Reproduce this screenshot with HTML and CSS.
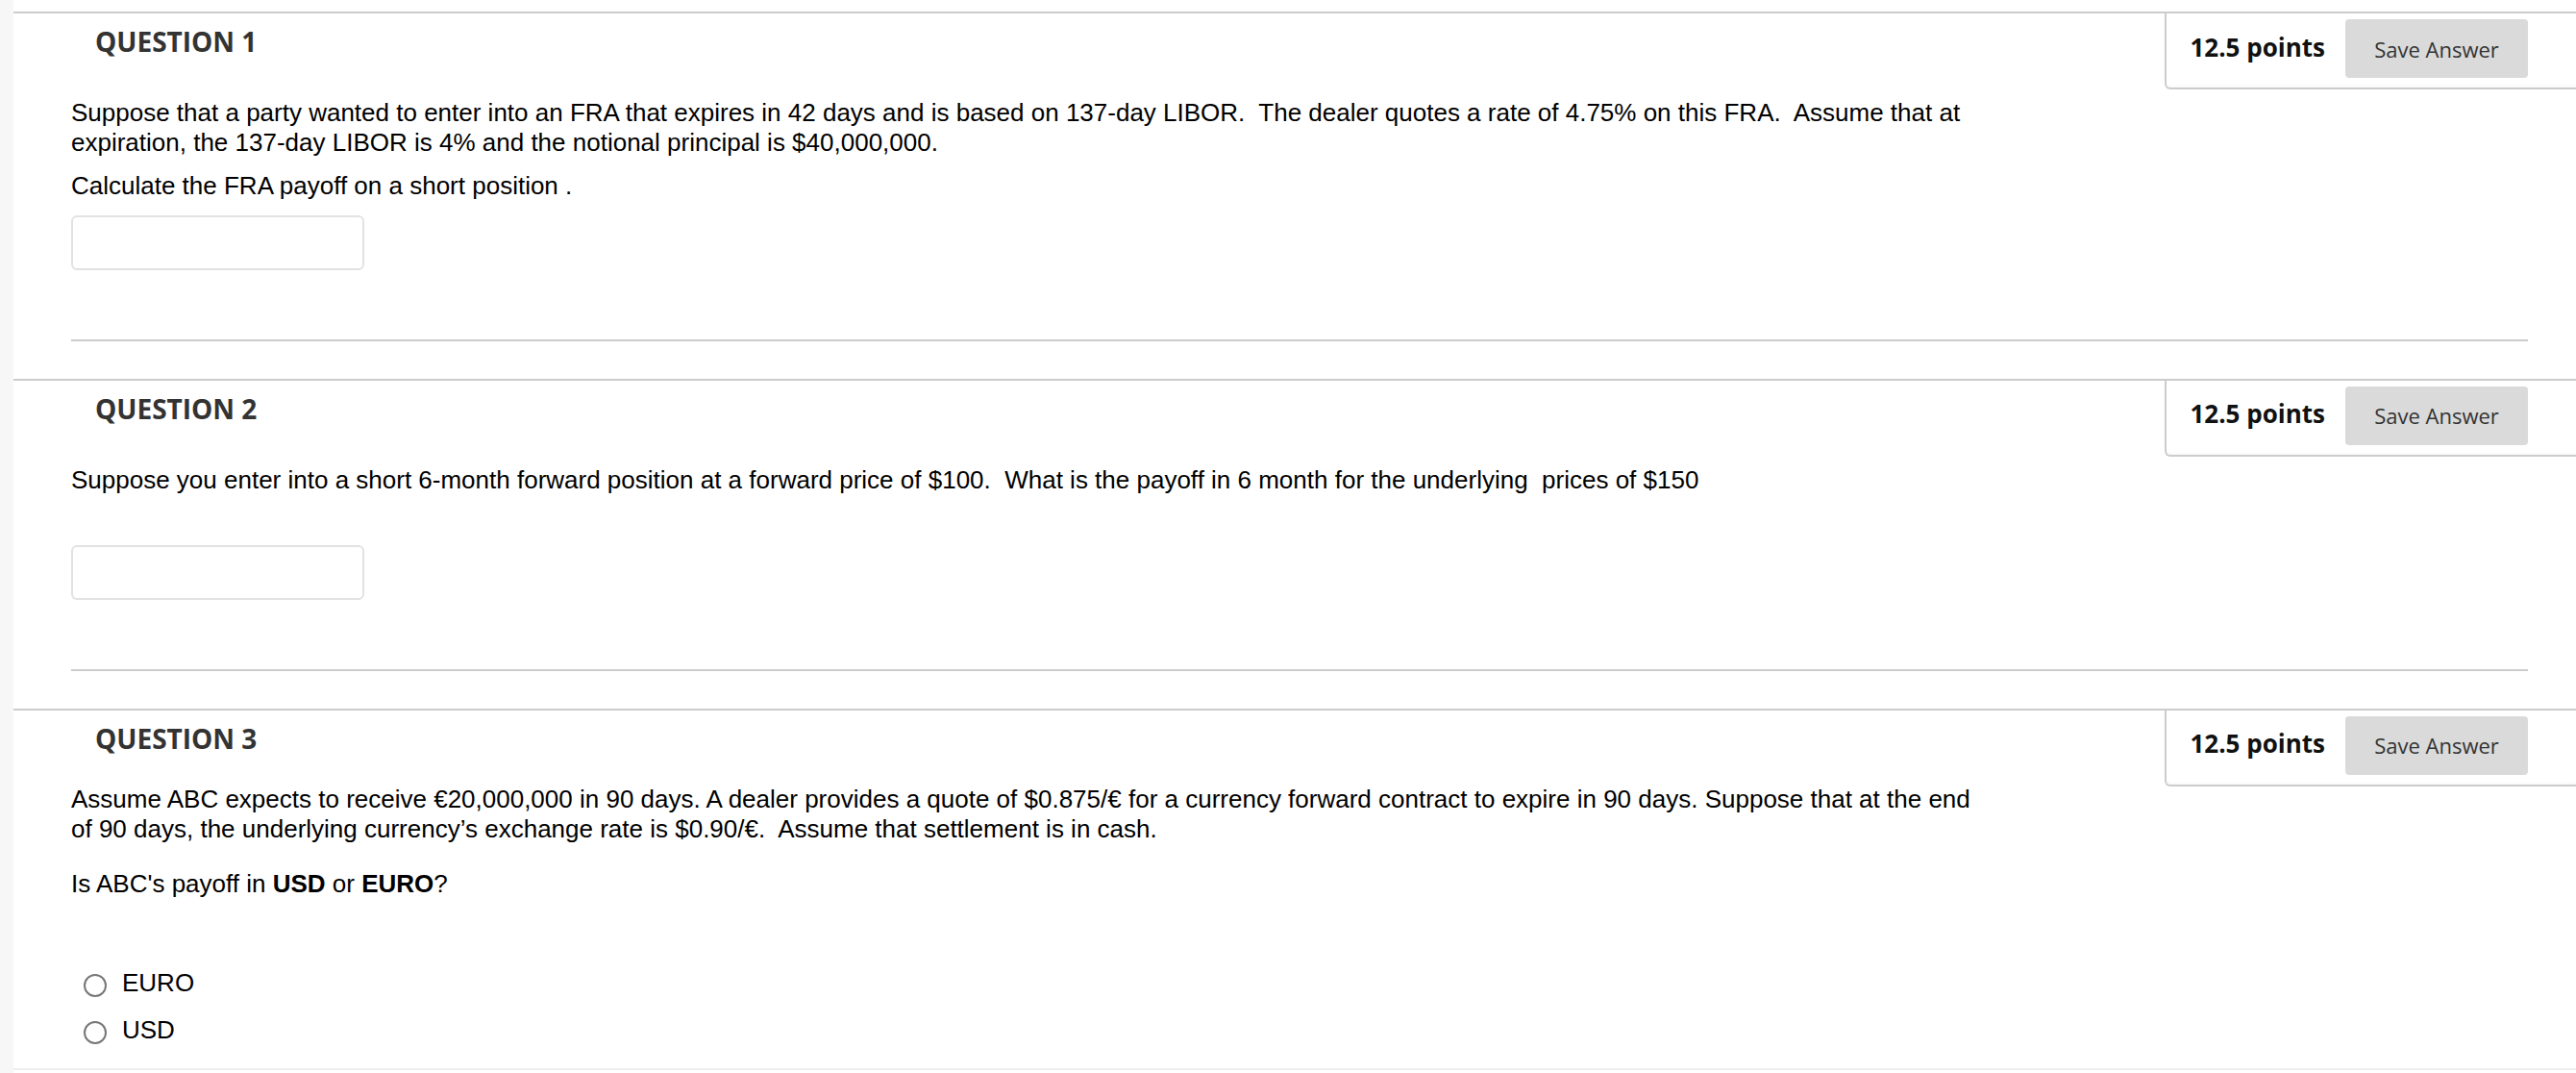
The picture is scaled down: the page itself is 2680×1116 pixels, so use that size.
FILE: index.html
```html
<!DOCTYPE html>
<html lang="en">
<head>
<meta charset="utf-8">
<title>Test</title>
<link rel="stylesheet" href="styles.css">
</head>
<body>
<main class="page">
  <section class="question">
    <div class="points-box">
      <span class="points">12.5 points</span>
      <button class="save-btn" type="button">Save Answer</button>
    </div>
    <h3 class="q-title">QUESTION 1</h3>
    <div class="q-body">
      <p>Suppose that a party wanted to enter into an FRA that expires in 42 days and is based on 137-day LIBOR.&nbsp; The dealer quotes a rate of 4.75% on this FRA.&nbsp; Assume that at expiration, the 137-day LIBOR is 4% and the notional principal is $40,000,000.</p>
      <p>Calculate the FRA payoff on a short position .</p>
      <div class="answer"><input class="answer-input" type="text"></div>
    </div>
    <hr class="q-sep">
  </section>

  <section class="question">
    <div class="points-box">
      <span class="points">12.5 points</span>
      <button class="save-btn" type="button">Save Answer</button>
    </div>
    <h3 class="q-title">QUESTION 2</h3>
    <div class="q-body">
      <p>Suppose you enter into a short 6-month forward position at a forward price of $100.&nbsp; What is the payoff in 6 month for the underlying&nbsp; prices of $150</p>
      <div class="answer answer-spaced"><input class="answer-input" type="text"></div>
    </div>
    <hr class="q-sep">
  </section>

  <section class="question">
    <div class="points-box">
      <span class="points">12.5 points</span>
      <button class="save-btn" type="button">Save Answer</button>
    </div>
    <h3 class="q-title">QUESTION 3</h3>
    <div class="q-body q-body-tight">
      <p class="p-wide">Assume ABC expects to receive €20,000,000 in 90 days. A dealer provides a quote of $0.875/€ for a currency forward contract to expire in 90 days. Suppose that at the end of 90 days, the underlying currency’s exchange rate is $0.90/€.&nbsp; Assume that settlement is in cash.</p>
      <p>Is ABC's payoff in <b>USD</b> or <b>EURO</b>?</p>
      <ul class="choices">
        <li class="choice"><span class="radio"></span><span>EURO</span></li>
        <li class="choice"><span class="radio"></span><span>USD</span></li>
      </ul>
    </div>
  </section>
  <div class="next-question"></div>
</main>
</body>
</html>
```
FILE: styles.css
```css
* { box-sizing: border-box; }
html, body { margin: 0; padding: 0; }
body {
  background: #f7f7f7;
  font-family: "Liberation Sans", Arial, sans-serif;
  color: #000;
  height: 1116px;
  overflow: hidden;
}
.page {
  margin-left: 14px;
  background: #fff;
  padding-top: 12px;
  min-height: 1116px;
}
.question {
  position: relative;
  border-top: 2px solid #cccccc;
  padding: 10px 50px 0 60px;
}
.points-box {
  position: absolute;
  top: 0;
  right: 0;
  display: flex;
  align-items: center;
  gap: 21px;
  padding: 6px 50px 10px 24px;
  border-left: 2px solid #cccccc;
  border-bottom: 2px solid #cccccc;
  border-bottom-left-radius: 6px;
  background: #fff;
  box-shadow: inset 0 -4px 4px -3px rgba(0,0,0,0.04);
}
.points {
  font-family: "Open Sans", sans-serif;
  font-weight: 700;
  font-size: 26px;
  color: #111;
  margin-top: -4px;
}
.save-btn {
  width: 190px;
  height: 61px;
  border: none;
  border-radius: 4px;
  background: #dadada;
  font-family: "Open Sans", sans-serif;
  font-size: 22px;
  color: #333;
  padding: 0;
}
.q-title {
  margin: 0 0 0 25px;
  font-family: "Open Sans", sans-serif;
  font-weight: 700;
  font-size: 28px;
  line-height: 38px;
  color: #333;
}
.q-body {
  margin-top: 40px;
  max-width: 2000px;
  font-size: 26px;
  line-height: 31.2px;
}
.q-body-tight { margin-top: 29px; }
.q-body p { margin: 0 0 14px; }
.q-body .p-wide { margin-bottom: 26px; }
.answer { margin: 0; }
.answer-spaced { margin-top: 52px; }
.answer-input {
  display: block;
  width: 305px;
  height: 57px;
  border: 2px solid #e2e2e2;
  border-radius: 6px;
  background: #fff;
  margin: 0;
}
.q-sep {
  margin: 72px 0 39px;
  border: none;
  border-top: 2px solid #cccccc;
  height: 0;
}
.choices {
  list-style: none;
  margin: 63px 0 0;
  padding: 0;
}
.choice {
  display: flex;
  align-items: center;
  height: 49px;
  padding-left: 13px;
  gap: 16px;
}
.radio {
  width: 24px;
  height: 24px;
  border: 2px solid #777;
  border-radius: 50%;
  background: #fff;
  margin-top: 4px;
}
.next-question {
  margin-top: 15px;
  border-top: 2px solid #eeeeee;
}
```
